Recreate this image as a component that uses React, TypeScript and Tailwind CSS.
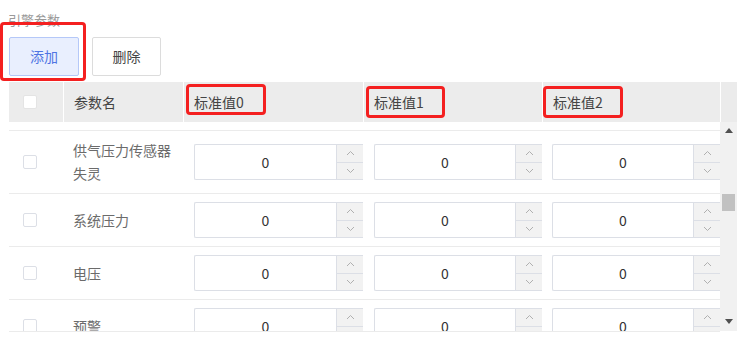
import React from "react";

const rows = [
  { name: ["供气压力传感器", "失灵"] },
  { name: ["系统压力"] },
  { name: ["电压"] },
  { name: ["预警"] },
];

function Chevron({ up }: { up?: boolean }) {
  return (
    <svg width="9" height="6" viewBox="0 0 9 6" fill="none">
      <polyline
        points={up ? "1,5 4.5,1.5 8,5" : "1,1 4.5,4.5 8,1"}
        stroke="#b0b0b0"
        strokeWidth="1"
      />
    </svg>
  );
}

function NumInput() {
  return (
    <div className="flex h-[36px] flex-1 border-y border-l border-[#dcdfe6] rounded-l-[2px] bg-white">
      <div className="flex flex-1 items-center justify-center text-[14px] text-[#333]">0</div>
      <div className="flex w-[27px] flex-col border-l border-[#dcdfe6] bg-[#f2f2f2]">
        <div className="flex flex-1 items-center justify-center border-b border-[#dcdfe6]">
          <Chevron up />
        </div>
        <div className="flex flex-1 items-center justify-center">
          <Chevron />
        </div>
      </div>
    </div>
  );
}

function Mark({ className }: { className: string }) {
  return <span className={"pointer-events-none absolute rounded-[4px] border-[3px] border-[#f42020] " + className} />;
}

export default function App() {
  return (
    <div className="h-[347px] w-[752px] overflow-hidden bg-white pl-[9px] font-['Noto_Sans_CJK_SC','Noto_Sans',sans-serif]">
      <div className="mt-[11px] h-[18px] text-[13px] leading-[18px] text-[#9a9a9a] -ml-[1px]">引擎参数</div>

      <div className="mt-[8px] flex gap-[13px]">
        <div className="relative">
          <button className="h-[39px] w-[70px] rounded-[2px] border border-[#b5c8f8] bg-[#e9effe] text-[14px] text-[#4f74e3]">
            添加
          </button>
          <Mark className="-left-[9px] -top-[15px] h-[59px] w-[86px]" />
        </div>
        <button className="h-[39px] w-[69px] rounded-[2px] border border-[#dcdcdc] bg-white text-[14px] text-[#444]">
          删除
        </button>
      </div>

      <div className="mt-[6px] w-[728px]">
        {/* header */}
        <div className="flex h-[40px] bg-[#ececec] text-[14px] text-[#444]">
          <div className="flex w-[54px] items-center pl-[14px]">
            <span className="h-[14px] w-[14px] rounded-[2px] border border-[#e4e4e4] bg-white" />
          </div>
          <div className="flex w-[120px] items-center border-l border-white pl-[10px]">参数名</div>
          <div className="relative flex w-[180px] items-center border-l border-white pl-[10px]">
            标准值0
            <Mark className="left-[2px] top-[2px] h-[31px] w-[80px]" />
          </div>
          <div className="relative flex w-[179px] items-center border-l border-white pl-[10px]">
            标准值1
            <Mark className="left-[2px] top-[4px] h-[32px] w-[79px]" />
          </div>
          <div className="relative flex w-[178px] items-center border-l border-white pl-[10px]">
            标准值2
            <Mark className="left-[0px] top-[4px] h-[32px] w-[80px]" />
          </div>
          <div className="w-[17px] border-l border-white bg-[#ebebeb]" />
        </div>

        {/* body */}
        <div className="flex h-[210px]">
          <div className="h-[210px] w-[711px] overflow-hidden border-b border-[#ebebeb]">
            <div className="h-[9px] border-b border-[#ebebeb]" />
            {rows.map((r, i) => (
              <div key={i} className="flex border-b border-[#ebebeb]">
                <div className="flex w-[54px] items-center pl-[14px]">
                  <span className="h-[14px] w-[14px] rounded-[2px] border border-[#dcdfe6] bg-white" />
                </div>
                <div className="flex w-[120px] flex-col justify-center py-[8px] pl-[10px] text-[14px] leading-[23px] text-[#6b6b6b]">
                  {r.name.map((t) => (
                    <div key={t}>{t}</div>
                  ))}
                </div>
                <div className="flex w-[180px] items-center py-[8px] pl-[11px]">
                  <NumInput />
                </div>
                <div className="flex w-[179px] items-center py-[8px] pl-[11px]">
                  <NumInput />
                </div>
                <div className="flex w-[178px] items-center py-[8px] pl-[10px]">
                  <NumInput />
                </div>
              </div>
            ))}
          </div>
          <div className="flex h-[209px] w-[17px] flex-col items-center bg-[#f1f1f1]">
            <svg className="mt-[6px]" width="8" height="5" viewBox="0 0 8 5">
              <polygon points="0,5 4,0 8,5" fill="#505050" />
            </svg>
            <div className="mt-[61px] h-[17px] w-[13px] bg-[#c1c1c1]" />
            <div className="flex-1" />
            <svg className="mb-[7px]" width="8" height="5" viewBox="0 0 8 5">
              <polygon points="0,0 8,0 4,5" fill="#505050" />
            </svg>
          </div>
        </div>
      </div>
    </div>
  );
}
